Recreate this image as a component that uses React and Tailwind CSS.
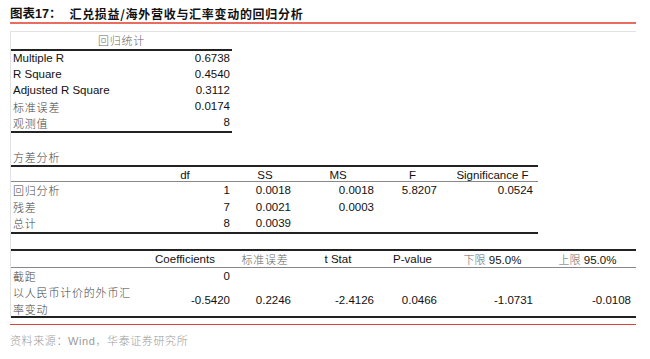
const COLS = 'grid grid-cols-[127px_94px_66px_80px_69px_91px_99px]';
const PADS = ['pl-[2px]', 'pr-[2px]', 'pr-[7px]', 'pr-[4px]', 'pr-[10px]', 'pr-[5px]', 'pr-[6px]'];

const EN = "font-['Liberation_Sans',Arial,sans-serif]";
const CN = "font-['Noto_Sans_CJK_SC',sans-serif] font-light tracking-[0.8px] text-[#444]";

const regStats = [
  ['Multiple R', '0.6738', true],
  ['R Square', '0.4540', true],
  ['Adjusted R Square', '0.3112', true],
  ['标准误差', '0.0174', false],
  ['观测值', '8', false],
];

const anovaHead = ['df', 'SS', 'MS', 'F', 'Significance F'];
const anovaRows = [
  ['回归分析', '1', '0.0018', '0.0018', '5.8207', '0.0524'],
  ['残差', '7', '0.0021', '0.0003', '', ''],
  ['总计', '8', '0.0039', '', '', ''],
];

const coefHead = [
  { t: 'Coefficients' },
  { t: '标准误差', cn: true },
  { t: 't Stat' },
  { t: 'P-value' },
  { cn: '下限', t: ' 95.0%' },
  { cn: '上限', t: ' 95.0%' },
];

const Label = ({ children }) => (
  <div className={`${CN} pl-[2px] text-[11px] whitespace-nowrap`}>{children}</div>
);

const Val = ({ i, children }) => (
  <div className={`${PADS[i]} text-right`}>{children}</div>
);

export default function App() {
  return (
    <div className={`w-[650px] h-[359px] bg-white overflow-hidden text-[11.5px] text-[#111] ${EN}`}>
      {/* title */}
      <div className="h-[22px] pt-[5px] pl-[10px] leading-[16px] flex items-center">
        <span className="font-bold text-[12.5px] font-['Noto_Sans_CJK_SC',sans-serif]">
          图表<span className={`${EN}`}>17</span>：
        </span>
        <span className="ml-[8px] text-[12px] font-semibold tracking-[0.7px] font-['Noto_Sans_CJK_SC',sans-serif]">
          汇兑损益/海外营收与汇率变动的回归分析
        </span>
      </div>
      <div className="ml-[10px] w-[626px] h-[2px] bg-[#ea6b5f]" />

      <div className="ml-[10px] mt-[7px] w-[626px] border-t border-l border-[#e2e2e2]">
        {/* regression statistics */}
        <div className="w-[221px]">
          <div className="h-[17px] flex items-center justify-center">
            <span className={`${CN} text-[11px] text-[#666]`}>回归统计</span>
          </div>
          <div className="border-t-2 border-[#222]">
            {regStats.map(([k, v, en]) => (
              <div key={k} className="h-[16px] flex items-center justify-between">
                {en ? <div className="pl-[2px]">{k}</div> : <Label>{k}</Label>}
                <div className="pr-[2px]">{v}</div>
              </div>
            ))}
          </div>
          <div className="border-t-2 border-[#222]" />
        </div>

        {/* anova */}
        <div className="mt-[16px] h-[16px] flex items-center">
          <Label>方差分析</Label>
        </div>
        <div className="w-[527px] border-t-2 border-[#222]">
          <div className={`${COLS} h-[15px] items-center border-b border-[#888]`}>
            <div />
            {anovaHead.map((h) => (
              <div key={h} className="text-center">{h}</div>
            ))}
          </div>
          {anovaRows.map((r) => (
            <div key={r[0]} className={`${COLS} h-[16.5px] items-center`}>
              <Label>{r[0]}</Label>
              {r.slice(1).map((v, i) => (
                <Val key={i} i={i + 1}>{v}</Val>
              ))}
            </div>
          ))}
          <div className="border-t-2 border-[#222]" />
        </div>

        {/* coefficients */}
        <div className="mt-[15px] border-t-2 border-[#222]">
          <div className={`${COLS} h-[17px] items-center border-b border-[#888]`}>
            <div />
            {coefHead.map((h, i) => (
              <div key={i} className="text-center whitespace-nowrap">
                {h.cn === true ? (
                  <span className={`${CN} text-[11px] text-[#666]`}>{h.t}</span>
                ) : (
                  <>
                    {h.cn && <span className={`${CN} text-[11px] text-[#666] tracking-[0px]`}>{h.cn}</span>}
                    {h.t}
                  </>
                )}
              </div>
            ))}
          </div>
          <div className={`${COLS} h-[16px] items-center`}>
            <Label>截距</Label>
            <Val i={1}>0</Val>
          </div>
          <div className={`${COLS} h-[32px] items-center`}>
            <div className={`${CN} pl-[2px] text-[11px] leading-[17px] whitespace-nowrap`}>
              以人民币计价的外币汇
              <br />
              率变动
            </div>
            <Val i={1}>-0.5420</Val>
            <Val i={2}>0.2246</Val>
            <Val i={3}>-2.4126</Val>
            <Val i={4}>0.0466</Val>
            <Val i={5}>-1.0731</Val>
            <Val i={6}>-0.0108</Val>
          </div>
          <div className="border-t-2 border-[#222]" />
        </div>
      </div>

      {/* source */}
      <div className="ml-[10px] mt-[6px] w-[626px] h-[1px] bg-[#d9443a]" />
      <div className="pl-[10px] mt-[8px] text-[11px] text-[#9a9a9a] font-['Noto_Sans_CJK_SC',sans-serif] font-light tracking-[0.6px] leading-[14px]">
        资料来源：<span className={EN}>Wind</span>，华泰证券研究所
      </div>
    </div>
  );
}
